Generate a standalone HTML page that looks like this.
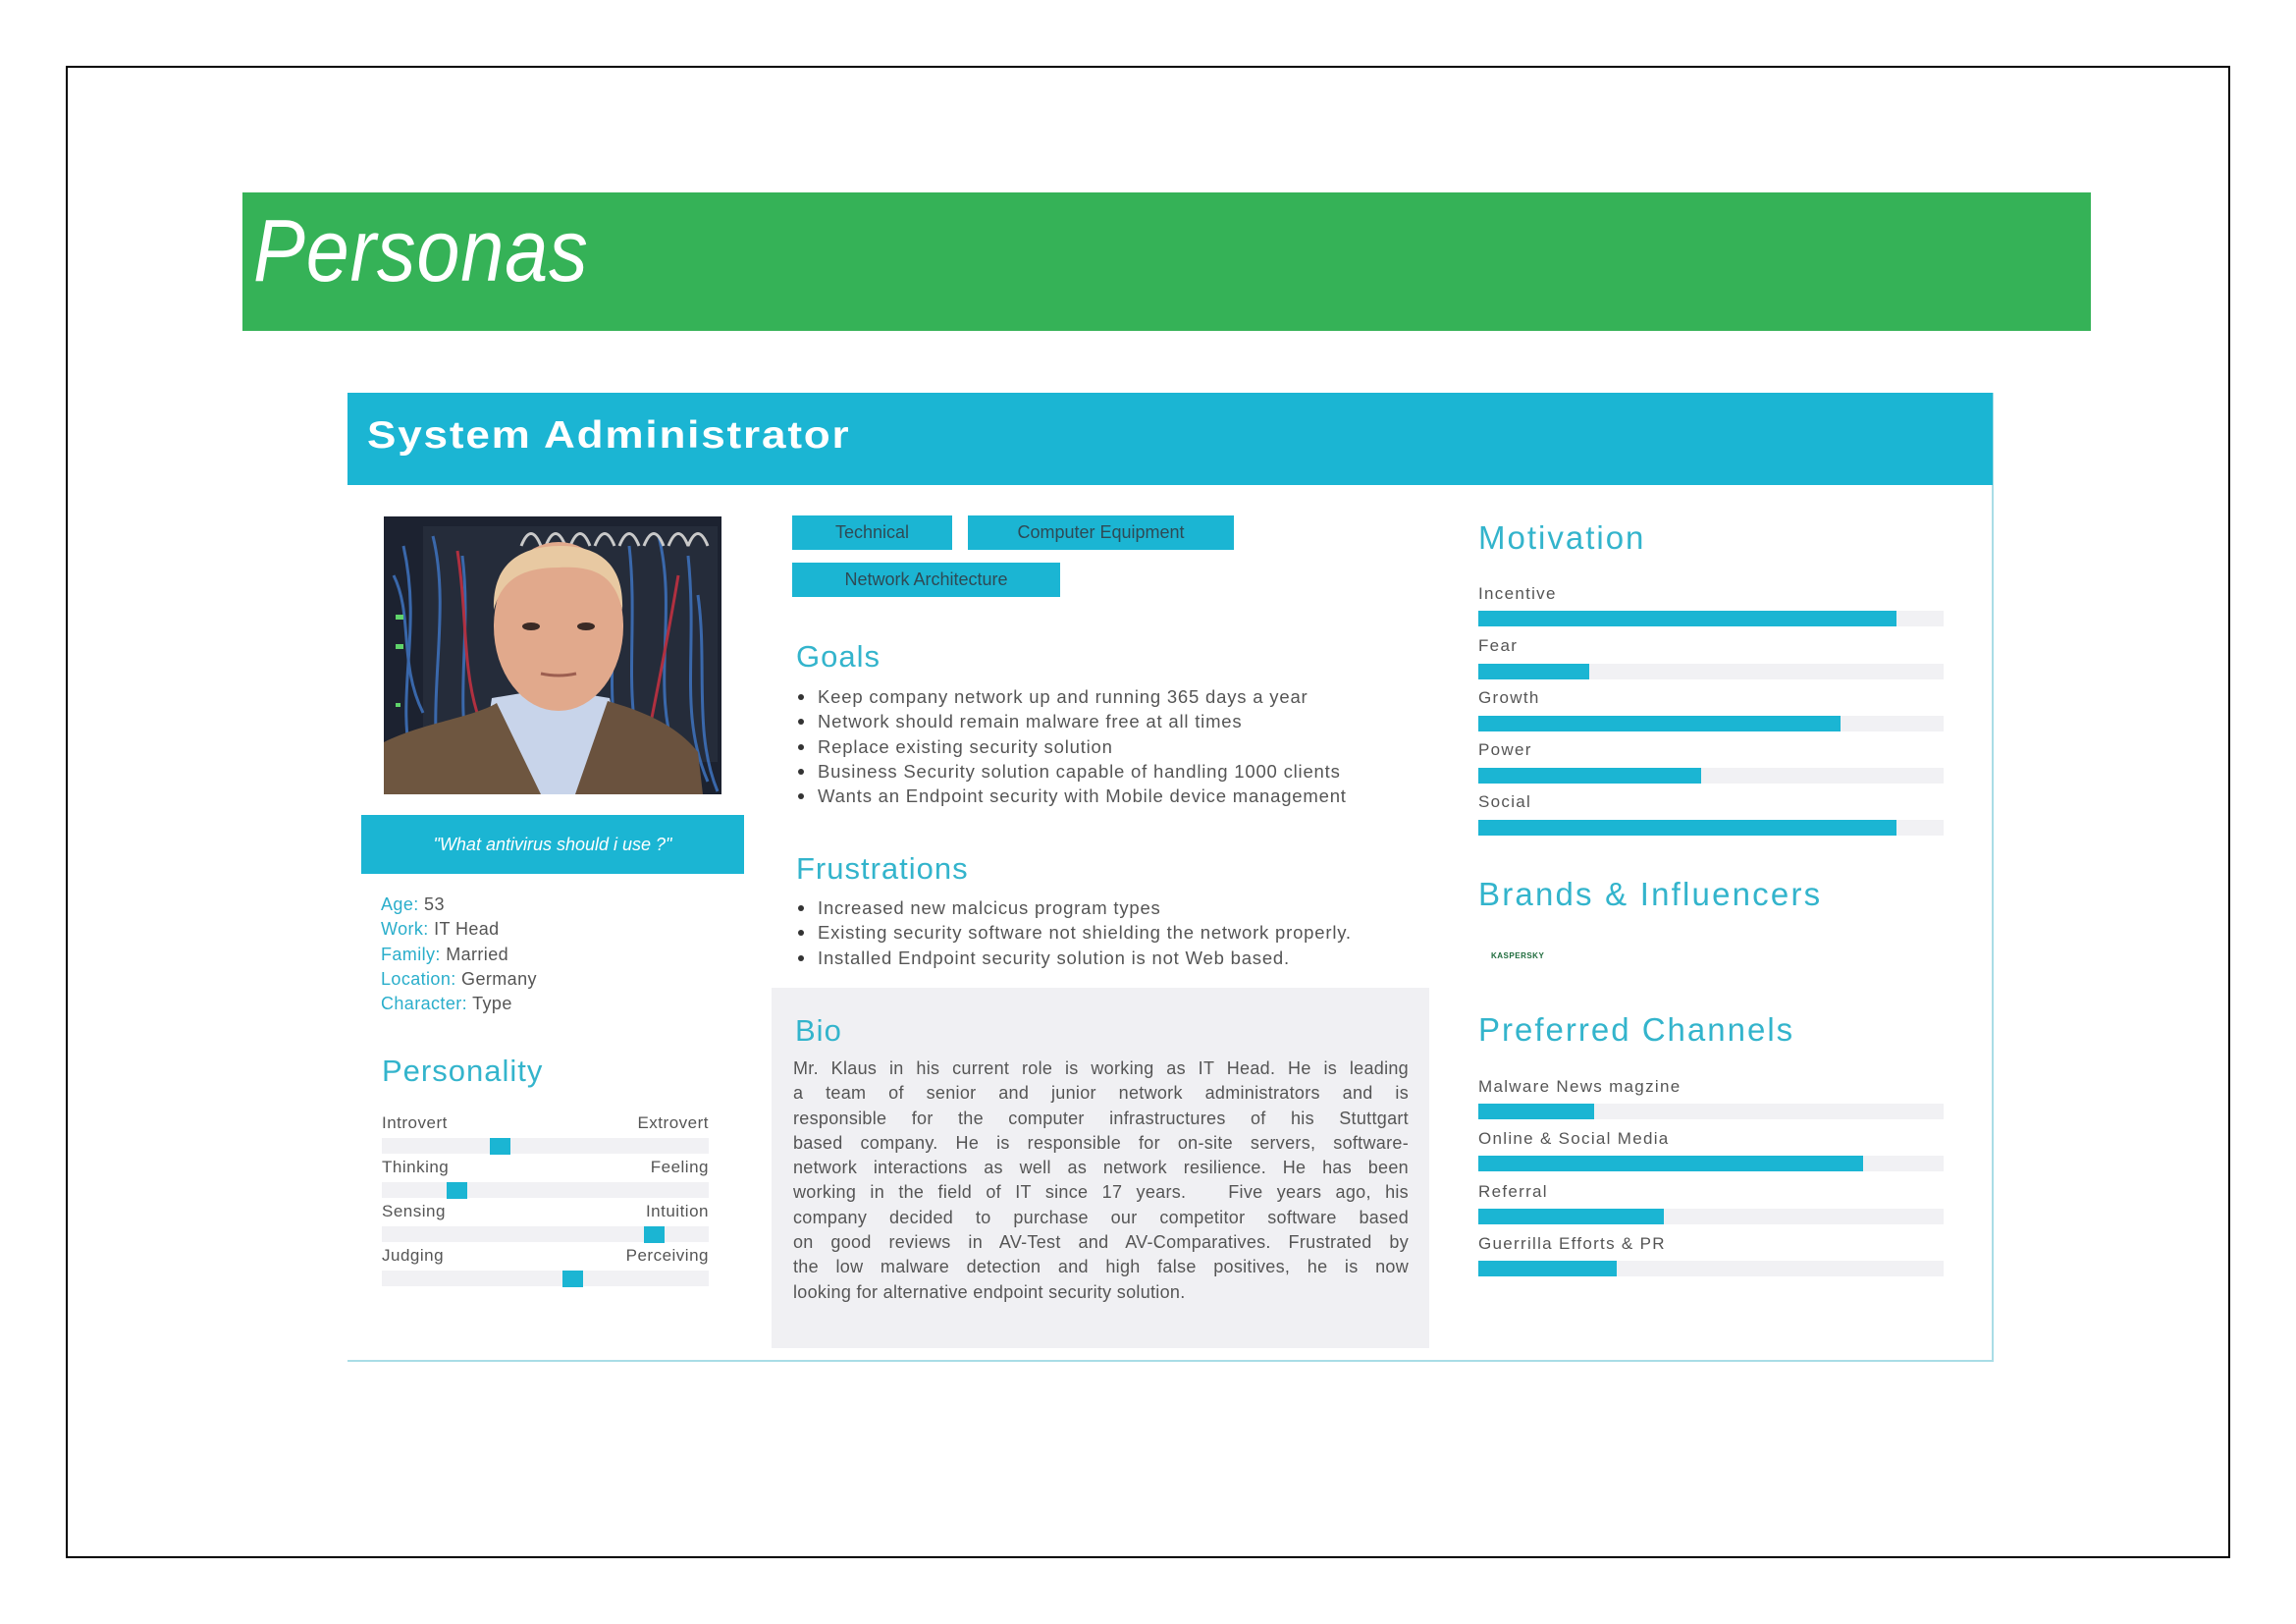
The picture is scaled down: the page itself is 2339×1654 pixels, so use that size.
<!DOCTYPE html>
<html><head><meta charset="utf-8"><style>
*{margin:0;padding:0;box-sizing:border-box}
body{width:2339px;height:1654px;background:#fff;position:relative;overflow:hidden;font-family:"Liberation Sans",sans-serif}
.a{position:absolute}
.frame{left:67px;top:67px;width:2205px;height:1520px;border:2px solid #000}
.green{left:247px;top:196px;width:1883px;height:141px;background:#35b257}
.pers{left:258px;top:205px;font-size:90px;font-style:italic;color:#fff;transform:scaleX(0.88);transform-origin:left top;letter-spacing:1px}
.card{left:354px;top:400px;width:1677px;height:987px;border-right:2px solid #a9dde6;border-bottom:2px solid #a9dde6;background:#fff}
.hdr{left:354px;top:400px;width:1676px;height:94px;background:#1bb5d3}
.title{left:374px;top:422px;font-size:39px;font-weight:bold;color:#fff;letter-spacing:1.6px;transform:scaleX(1.13);transform-origin:left top}
.quote{left:368px;top:830px;width:390px;height:60px;background:#1bb5d3;color:#fff;font-style:italic;font-size:18px;text-align:center;line-height:60px}
.info{left:388px;top:909px;font-size:18px;line-height:25.3px;color:#555;letter-spacing:.4px}
.info b{font-weight:normal;color:#2aaecb}
.h{color:#33b4cc;font-weight:normal;letter-spacing:1px}
.tag{background:#1bb5d3;color:#2e4a55;font-size:18px;text-align:center;line-height:35px;height:35px}
ul{list-style:none}
.bl li{position:relative;padding-left:20px;font-size:18.5px;line-height:25.3px;color:#555;letter-spacing:.8px;white-space:nowrap}
.bl li:before{content:"";position:absolute;left:0;top:10px;width:6px;height:6px;border-radius:50%;background:#333}
.bio{left:786px;top:1006px;width:670px;height:367px;background:#f0f0f3}
.biot{left:808px;top:1076px;width:627px;font-size:18px;line-height:25.3px;color:#555;letter-spacing:.3px}
.biot span{display:block;text-align:justify;text-align-last:justify;white-space:nowrap}
.biot span.l{text-align-last:left}
.sl{font-size:17px;color:#555;letter-spacing:.5px}
.track{background:#f1f1f4;height:16px}
.fill{background:#1bb5d3;height:16px;position:absolute;left:0;top:0}
.mk{background:#1bb5d3;width:21px;height:17px;position:absolute;top:0}
.lab{font-size:17px;color:#555;letter-spacing:1.3px}
</style></head><body>
<div class="a frame"></div>
<div class="a green"></div>
<div class="a pers">Personas</div>

<div class="a card"></div>
<div class="a hdr"></div>
<div class="a title">System Administrator</div>

<svg class="a" style="left:391px;top:526px" width="344" height="283" viewBox="0 0 344 283">
<rect width="344" height="283" fill="#1c2230"/>
<rect x="40" y="10" width="300" height="240" fill="#252c3a"/>
<g stroke="#3d6fb8" stroke-width="3" fill="none" opacity=".9">
<path d="M20 30 C40 120 10 180 30 260"/><path d="M50 20 C70 100 40 200 60 270"/><path d="M80 40 C90 120 70 200 90 250"/>
<path d="M250 30 C260 120 240 200 270 260"/><path d="M280 20 C300 100 270 180 300 250"/><path d="M310 40 C320 140 300 200 330 270"/>
<path d="M230 60 C240 140 220 200 250 260"/><path d="M320 80 C330 150 315 220 340 280"/><path d="M10 60 C30 100 15 150 40 200"/>
</g>
<g stroke="#c9c9c9" stroke-width="3" fill="none"><path d="M140 30 q10 -25 20 0 M165 30 q10 -25 20 0 M190 30 q10 -25 20 0 M215 30 q10 -25 20 0 M240 30 q10 -25 20 0 M265 30 q10 -25 20 0 M290 30 q10 -25 20 0 M310 30 q10 -25 20 0"/></g>
<g stroke="#b03040" stroke-width="3" fill="none"><path d="M75 35 C85 100 80 150 95 200"/><path d="M300 60 C290 120 280 170 270 220"/></g>
<g fill="#5fd36a"><rect x="12" y="100" width="8" height="5"/><rect x="12" y="130" width="8" height="5"/><rect x="12" y="190" width="5" height="4"/></g>
<path d="M110 185 L170 175 L230 185 L250 283 L95 283 Z" fill="#c8d4ea"/>
<path d="M0 230 C40 210 90 205 115 190 L160 283 L0 283 Z" fill="#6e5640"/>
<path d="M228 188 C270 200 300 215 320 240 L325 283 L195 283 Z" fill="#6a523e"/>
<ellipse cx="178" cy="112" rx="66" ry="86" fill="#e1a98c"/>
<path d="M112 95 C110 40 150 30 180 30 C215 30 245 45 243 95 C235 60 215 50 178 52 C140 52 120 65 112 95Z" fill="#e8c9a2"/>
<g fill="#3a2a25"><ellipse cx="150" cy="112" rx="9" ry="4"/><ellipse cx="206" cy="112" rx="9" ry="4"/></g>
<path d="M160 160 q18 4 36 0" stroke="#9c5e50" stroke-width="3" fill="none"/>
</svg>

<div class="a quote">"What antivirus should i use ?"</div>
<div class="a info"><b>Age:</b> 53<br><b>Work:</b> IT Head<br><b>Family:</b> Married<br><b>Location:</b> Germany<br><b>Character:</b> Type</div>

<div class="a h" style="left:389px;top:1073px;font-size:31px">Personality</div>
<div class="a sl" style="left:389px;top:1134px">Introvert</div><div class="a sl" style="left:622px;top:1134px;width:100px;text-align:right">Extrovert</div>
<div class="a track" style="left:389px;top:1159px;width:333px"><div class="mk" style="left:110px"></div></div>
<div class="a sl" style="left:389px;top:1179px">Thinking</div><div class="a sl" style="left:622px;top:1179px;width:100px;text-align:right">Feeling</div>
<div class="a track" style="left:389px;top:1204px;width:333px"><div class="mk" style="left:66px"></div></div>
<div class="a sl" style="left:389px;top:1224px">Sensing</div><div class="a sl" style="left:622px;top:1224px;width:100px;text-align:right">Intuition</div>
<div class="a track" style="left:389px;top:1249px;width:333px"><div class="mk" style="left:267px"></div></div>
<div class="a sl" style="left:389px;top:1269px">Judging</div><div class="a sl" style="left:602px;top:1269px;width:120px;text-align:right">Perceiving</div>
<div class="a track" style="left:389px;top:1294px;width:333px"><div class="mk" style="left:184px"></div></div>

<div class="a tag" style="left:807px;top:525px;width:163px">Technical</div>
<div class="a tag" style="left:986px;top:525px;width:271px">Computer Equipment</div>
<div class="a tag" style="left:807px;top:573px;width:273px">Network Architecture</div>

<div class="a h" style="left:811px;top:651px;font-size:31px">Goals</div>
<ul class="a bl" style="left:813px;top:697px">
<li>Keep company network up and running 365 days a year</li>
<li>Network should remain malware free at all times</li>
<li>Replace existing security solution</li>
<li>Business Security solution capable of handling 1000 clients</li>
<li>Wants an Endpoint security with Mobile device management</li>
</ul>
<div class="a h" style="left:811px;top:867px;font-size:31px">Frustrations</div>
<ul class="a bl" style="left:813px;top:912px">
<li>Increased new malcicus program types</li>
<li>Existing security software not shielding the network properly.</li>
<li>Installed Endpoint security solution is not Web based.</li>
</ul>

<div class="a bio"></div>
<div class="a h" style="left:810px;top:1032px;font-size:31px">Bio</div>
<div class="a biot">
<span>Mr. Klaus in his current role is working as IT Head. He is leading</span>
<span>a team of senior and junior network administrators and is</span>
<span>responsible for the computer infrastructures of his Stuttgart</span>
<span>based company. He is responsible for on-site servers, software-</span>
<span>network interactions as well as network resilience. He has been</span>
<span>working in the field of IT since 17 years. &nbsp; Five years ago, his</span>
<span>company decided to purchase our competitor software based</span>
<span>on good reviews in AV-Test and AV-Comparatives. Frustrated by</span>
<span>the low malware detection and high false positives, he is now</span>
<span class="l">looking for alternative endpoint security solution.</span>
</div>

<div class="a h" style="left:1506px;top:529px;font-size:33px;letter-spacing:2px">Motivation</div>
<div class="a lab" style="left:1506px;top:595px">Incentive</div>
<div class="a track" style="left:1506px;top:622px;width:474px"><div class="fill" style="width:426px"></div></div>
<div class="a lab" style="left:1506px;top:648px">Fear</div>
<div class="a track" style="left:1506px;top:676px;width:474px"><div class="fill" style="width:113px"></div></div>
<div class="a lab" style="left:1506px;top:701px">Growth</div>
<div class="a track" style="left:1506px;top:729px;width:474px"><div class="fill" style="width:369px"></div></div>
<div class="a lab" style="left:1506px;top:754px">Power</div>
<div class="a track" style="left:1506px;top:782px;width:474px"><div class="fill" style="width:227px"></div></div>
<div class="a lab" style="left:1506px;top:807px">Social</div>
<div class="a track" style="left:1506px;top:835px;width:474px"><div class="fill" style="width:426px"></div></div>

<div class="a h" style="left:1506px;top:892px;font-size:33px;letter-spacing:2.2px">Brands &amp; Influencers</div>
<div class="a" style="left:1519px;top:969px;font-size:8px;color:#1e6b3c;font-weight:bold;letter-spacing:.5px">KASPERSKY</div>

<div class="a h" style="left:1506px;top:1030px;font-size:33px;letter-spacing:2px">Preferred Channels</div>
<div class="a lab" style="left:1506px;top:1097px">Malware News magzine</div>
<div class="a track" style="left:1506px;top:1124px;width:474px"><div class="fill" style="width:118px"></div></div>
<div class="a lab" style="left:1506px;top:1150px">Online &amp; Social Media</div>
<div class="a track" style="left:1506px;top:1177px;width:474px"><div class="fill" style="width:392px"></div></div>
<div class="a lab" style="left:1506px;top:1204px">Referral</div>
<div class="a track" style="left:1506px;top:1231px;width:474px"><div class="fill" style="width:189px"></div></div>
<div class="a lab" style="left:1506px;top:1257px">Guerrilla Efforts &amp; PR</div>
<div class="a track" style="left:1506px;top:1284px;width:474px"><div class="fill" style="width:141px"></div></div>
</body></html>
